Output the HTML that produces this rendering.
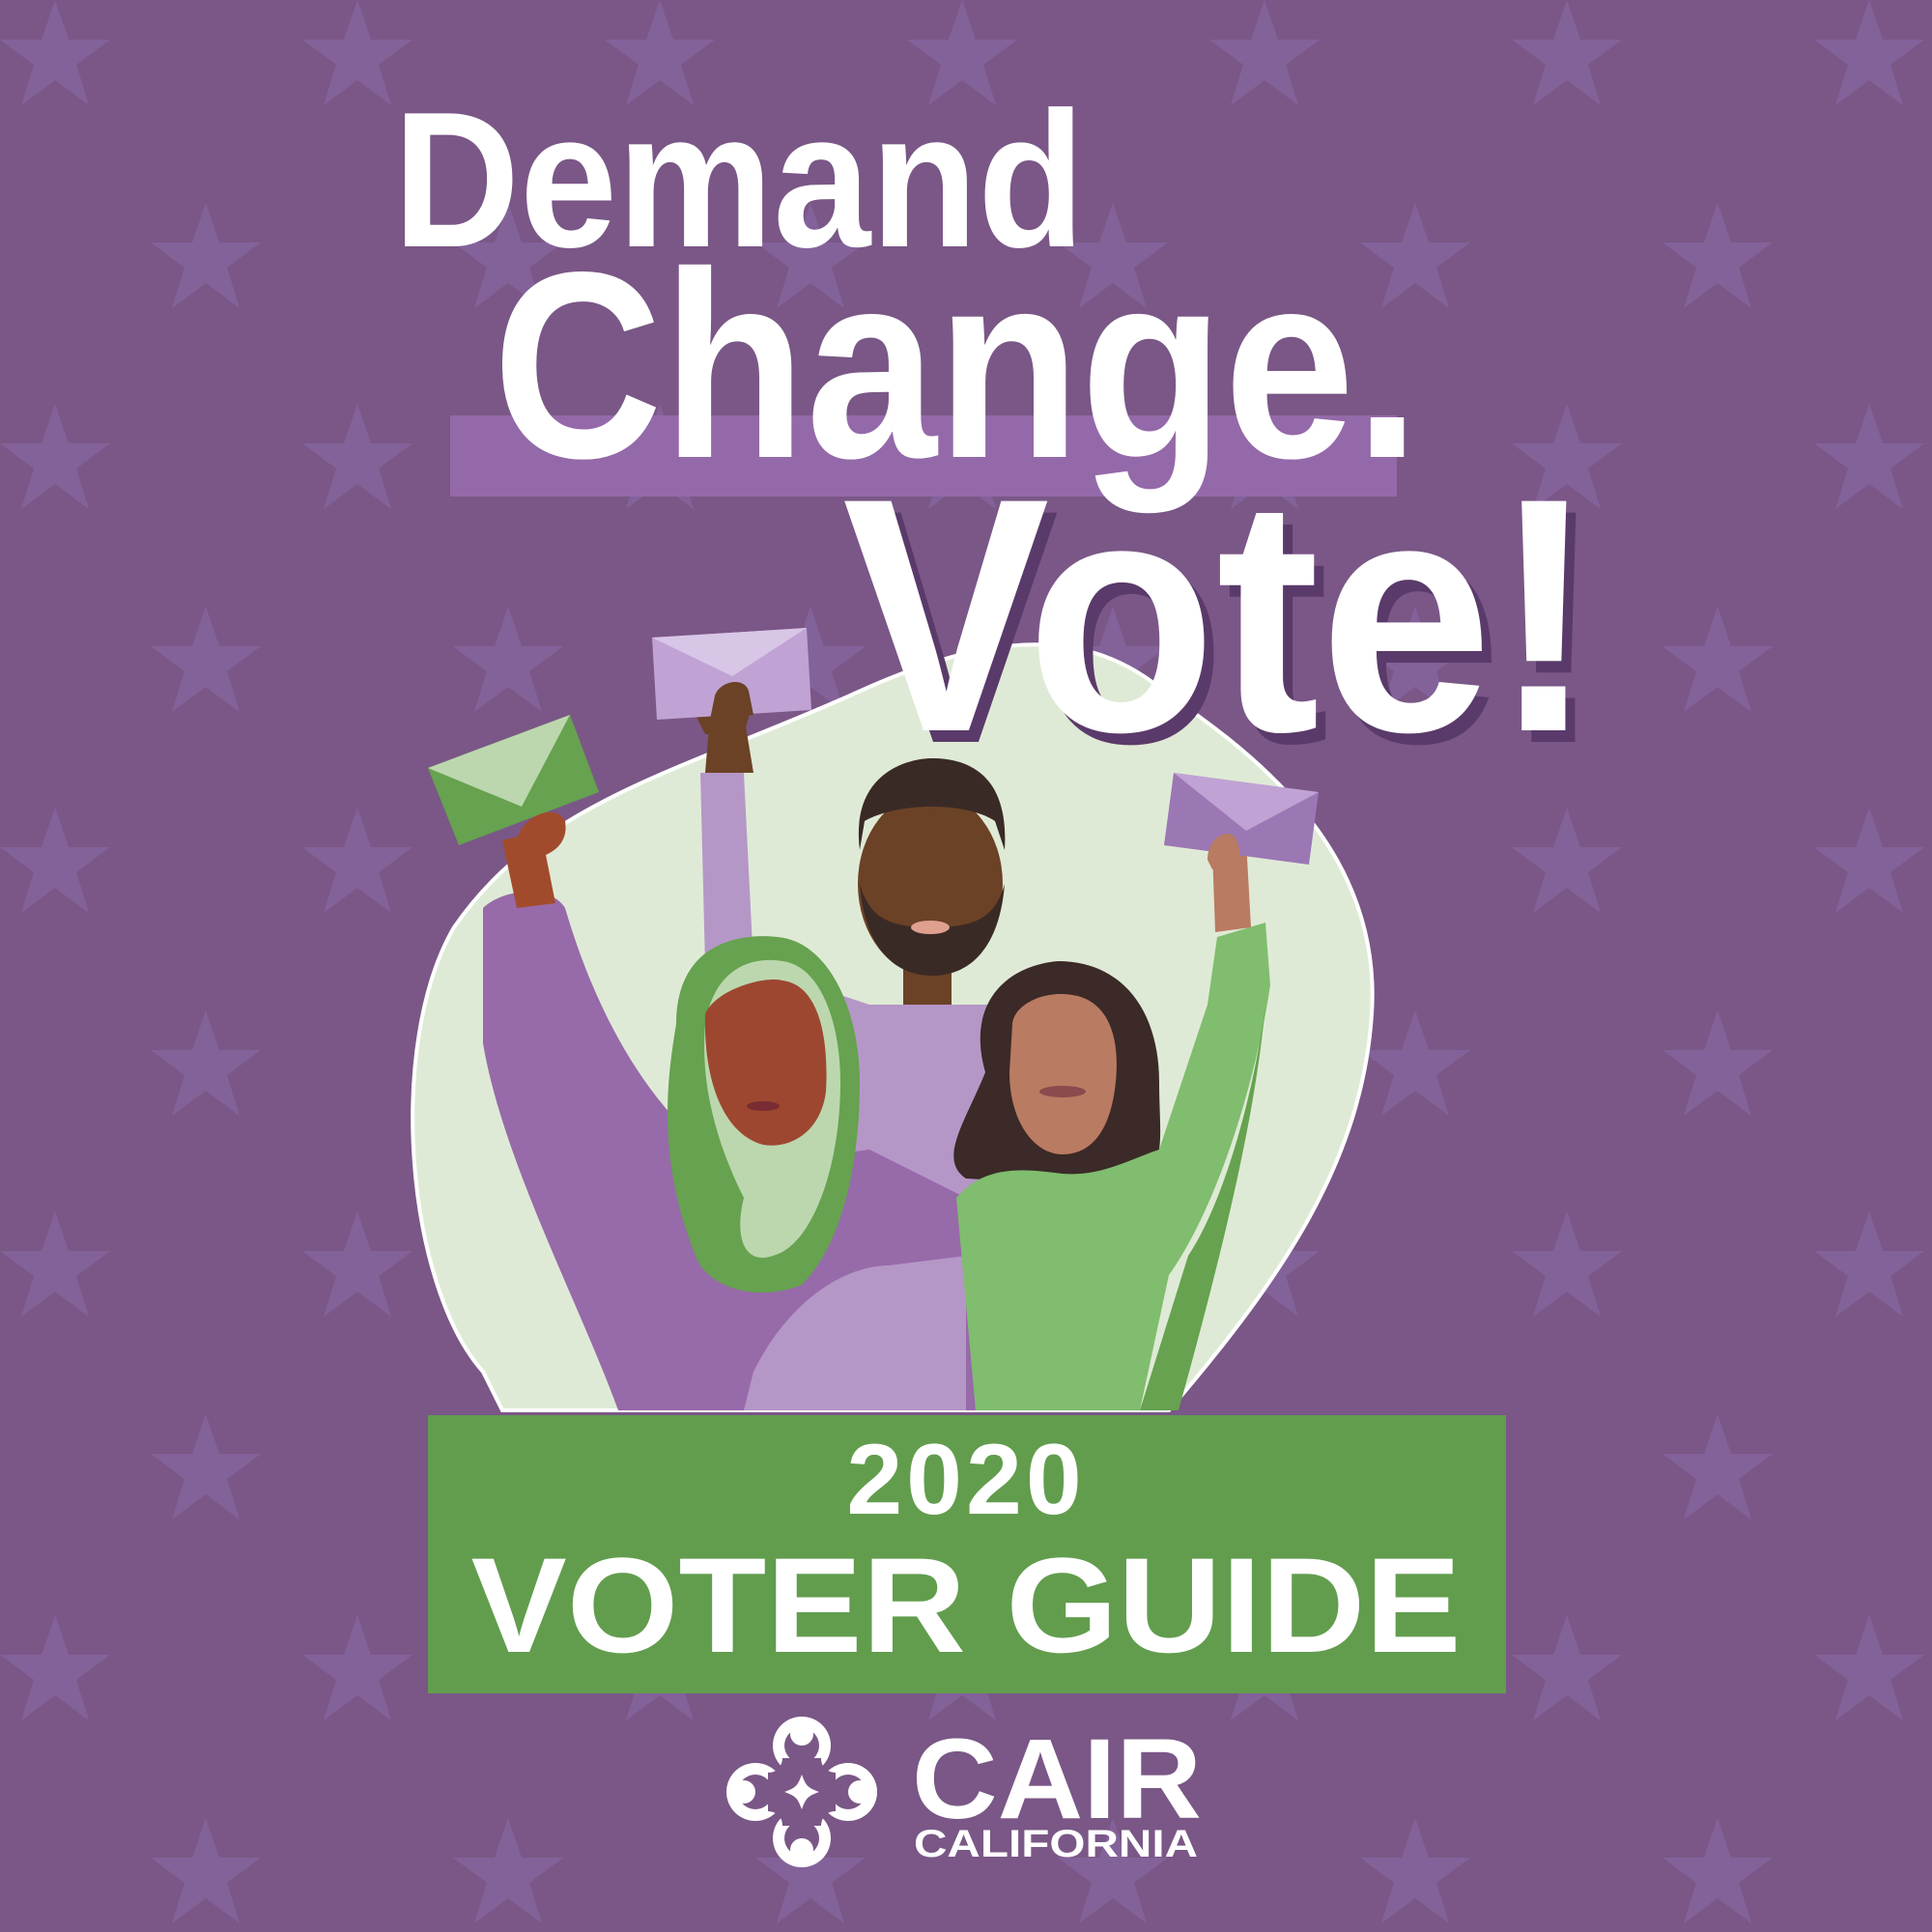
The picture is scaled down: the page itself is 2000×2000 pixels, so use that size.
<!DOCTYPE html>
<html><head><meta charset="utf-8"><style>
html,body{margin:0;padding:0;}
body{width:2000px;height:2000px;background:#7a5786;overflow:hidden;position:relative;font-family:"Liberation Sans",sans-serif;}
svg{position:absolute;left:0;top:0;}
</style></head><body>
<svg width="2000" height="2000" viewBox="0 0 2000 2000">
<defs>
<polygon id="st" points="0,-60 14,-19 57,-19 22,7 35,49 0,23 -35,49 -22,7 -57,-19 -14,-19"/>
<pattern id="pt" x="0" y="0" width="313" height="418" patternUnits="userSpaceOnUse">
<use href="#st" x="57" y="60" fill="#83629a"/>
<use href="#st" x="213" y="270" fill="#83629a"/>
</pattern>
</defs>
<rect width="2000" height="2000" fill="url(#pt)"/>

<!-- pale blob -->
<path d="M500,1420 C420,1330 400,1080 470,960 C560,830 700,800 880,720 C1010,660 1120,640 1210,720 C1330,800 1430,900 1420,1050 C1410,1200 1330,1320 1210,1460 L520,1460 Z" fill="#dfead6" stroke="#fff" stroke-width="4"/>

<!-- man -->
<path d="M725,800 L770,800 L780,1000 L900,1040 L1040,1040 L1060,1300 L800,1300 L730,1000 Z" fill="#b597c7"/>
<path d="M735,740 L770,740 L780,800 L730,800 Z" fill="#6b4226"/>
<path d="M720,740 C720,715 760,705 780,725 L770,760 L730,760 Z" fill="#6b4226"/>
<rect x="935" y="1000" width="50" height="40" fill="#6b4226"/>
<ellipse cx="963" cy="915" rx="75" ry="95" fill="#6b4226"/>
<path d="M890,880 C880,800 940,785 965,785 C1000,785 1045,800 1040,880 L1030,850 C1000,830 930,830 895,850 Z" fill="#3a2a26"/>
<path d="M890,915 C895,980 925,1010 965,1010 C1005,1010 1035,980 1040,915 C1030,950 1010,960 965,960 C920,960 900,950 890,915 Z" fill="#3a2a26"/>
<ellipse cx="963" cy="960" rx="20" ry="7" fill="#e0a090"/>
<polygon points="675,660 835,650 840,735 680,745" fill="#c0a3d4"/>
<polygon points="675,660 835,650 758,700" fill="#d8c6e6"/>
<!-- left woman body -->
<path d="M500,940 C520,920 570,915 585,940 C620,1060 680,1160 760,1210 L900,1190 L1000,1240 L1010,1460 L640,1460 C600,1350 520,1200 500,1080 Z" fill="#976aa9"/>
<path d="M520,870 L560,860 L575,935 L535,940 Z" fill="#a24b2c"/>
<polygon points="443,795 590,740 620,820 475,875" fill="#66a24f"/>
<polygon points="443,795 590,740 540,835" fill="#bcd7ae"/>
<path d="M535,870 C540,845 575,830 585,850 C590,880 560,890 540,890 Z" fill="#a24b2c"/>
<path d="M780,1420 C820,1340 880,1310 920,1310 L1000,1300 L1000,1460 L770,1460 Z" fill="#b597c7"/>
<!-- hijab -->
<path d="M700,1060 C700,980 760,965 805,970 C860,975 890,1050 890,1120 C890,1210 870,1290 830,1330 C780,1350 730,1330 720,1300 C680,1200 690,1120 700,1060 Z" fill="#66a24f"/>
<path d="M730,1060 C740,1000 780,990 810,995 C850,1000 870,1060 870,1120 C870,1210 840,1290 800,1300 C770,1310 760,1280 770,1240 C740,1180 725,1120 730,1060 Z" fill="#bcd7ae"/>
<path d="M730,1050 C740,1025 790,1010 810,1015 C850,1020 858,1080 855,1130 C850,1170 820,1190 790,1185 C750,1175 728,1120 730,1050 Z" fill="#9e4730"/>
<ellipse cx="790" cy="1145" rx="17" ry="5" fill="#7a2c34"/>
<!-- right woman -->
<path d="M1020,1110 C1000,1040 1040,1000 1095,995 C1165,995 1200,1050 1200,1120 C1200,1180 1210,1210 1170,1230 L1000,1220 C970,1200 1000,1160 1020,1110 Z" fill="#3b2a27"/>
<path d="M1048,1060 C1050,1040 1080,1025 1110,1030 C1145,1035 1160,1070 1155,1120 C1150,1170 1130,1195 1100,1195 C1070,1195 1045,1160 1045,1110 Z" fill="#b97b62"/>
<ellipse cx="1100" cy="1130" rx="24" ry="6" fill="#8a4a4e"/>
<path d="M990,1240 C1020,1205 1060,1210 1100,1215 C1140,1218 1170,1200 1200,1190 L1250,1040 L1260,970 L1310,955 L1315,1020 C1300,1120 1260,1250 1210,1320 L1180,1460 L1010,1460 Z" fill="#80bd6e"/>
<path d="M1230,1300 C1270,1240 1300,1120 1310,1040 C1300,1150 1270,1280 1220,1460 L1180,1460 Z" fill="#66a24f"/>
<path d="M1255,880 L1290,870 L1295,960 L1258,965 Z" fill="#b97b62"/>
<polygon points="1215,800 1365,820 1355,895 1205,875" fill="#9b77b4"/>
<polygon points="1215,800 1365,820 1290,860" fill="#c0a3d4"/>
<path d="M1250,890 C1250,865 1275,855 1280,870 C1290,890 1275,900 1255,900 Z" fill="#b97b62"/>
<path d="M740,720 C745,705 770,700 775,715 L780,740 L735,745 Z" fill="#6b4226"/>

<!-- green banner -->
<rect x="443" y="1465" width="1116" height="288" fill="#629d4e"/>
<text x="1000" y="1567" text-anchor="middle" font-family="Liberation Sans" font-weight="bold" font-size="104" fill="#fff" letter-spacing="4">2020</text>
<text x="1000" y="1710" text-anchor="middle" font-family="Liberation Sans" font-weight="bold" font-size="140" fill="#fff" textLength="1025" lengthAdjust="spacingAndGlyphs">VOTER GUIDE</text>

<!-- title -->
<rect x="466" y="430" width="980" height="84" fill="#9469a9"/>
<text x="407" y="255" font-family="Liberation Sans" font-weight="bold" font-size="200" fill="#fff" textLength="716" lengthAdjust="spacingAndGlyphs">Demand</text>
<text x="510" y="473" font-family="Liberation Sans" font-weight="bold" font-size="275" fill="#fff" textLength="960" lengthAdjust="spacingAndGlyphs">Change.</text>
<text x="882" y="768" font-family="Liberation Sans" font-weight="bold" font-size="345" fill="#5a3a6a" textLength="780" lengthAdjust="spacingAndGlyphs">Vote!</text>
<text x="872" y="756" font-family="Liberation Sans" font-weight="bold" font-size="345" fill="#fff" textLength="780" lengthAdjust="spacingAndGlyphs">Vote!</text>

<!-- logo icon -->
<g transform="translate(830,1855)" fill="#fff">
<circle cx="0" cy="-48" r="30"/><circle cx="0" cy="48" r="30"/><circle cx="-48" cy="0" r="30"/><circle cx="48" cy="0" r="30"/>
<rect x="-58" y="-58" width="116" height="116" fill="#fff" transform="rotate(45) scale(0.55)"/>
<circle cx="0" cy="-48" r="18" fill="#7a5786"/><circle cx="0" cy="48" r="18" fill="#7a5786"/><circle cx="-48" cy="0" r="18" fill="#7a5786"/><circle cx="48" cy="0" r="18" fill="#7a5786"/>
<path d="M-35,-20 C-20,-20 -20,-35 -20,-35 L20,-35 C20,-20 35,-20 35,-20 L35,20 C20,20 20,35 20,35 L-20,35 C-20,20 -35,20 -35,20 Z" fill="#7a5786"/>
<path d="M-12,0 C-4,-3 -3,-4 0,-12 C3,-4 4,-3 12,0 C4,3 3,4 0,12 C-3,4 -4,3 -12,0 Z" transform="scale(1.5)"/>
<circle cx="0" cy="-60" r="12"/><circle cx="0" cy="60" r="12"/><circle cx="-60" cy="0" r="12"/><circle cx="60" cy="0" r="12"/>
</g>
<text x="944" y="1882" font-family="Liberation Sans" font-weight="bold" font-size="118" fill="#fff" textLength="300" lengthAdjust="spacingAndGlyphs">CAIR</text>
<text x="946" y="1922" font-family="Liberation Sans" font-weight="bold" font-size="40" fill="#fff" textLength="294" lengthAdjust="spacingAndGlyphs">CALIFORNIA</text>
</svg>
</body></html>
